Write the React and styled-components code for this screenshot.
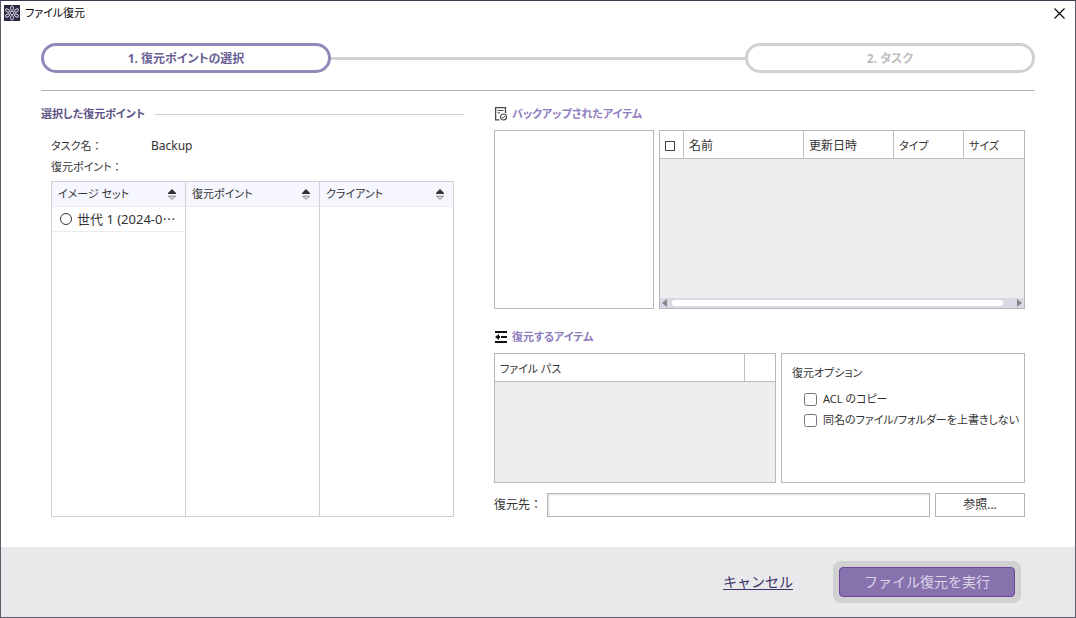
import React, { useState } from 'react';
import styled, { createGlobalStyle } from 'styled-components';

const GlobalStyle = createGlobalStyle`
  * {
    box-sizing: border-box;
  }
  body {
    margin: 0;
    background: #fff;
    color: #333;
    font-family: 'Noto Sans', 'Noto Sans CJK JP', sans-serif;
    font-size: 12px;
    line-height: 20px;
    font-feature-settings: 'palt';
  }
  button, input {
    font: inherit;
    color: inherit;
    margin: 0;
  }
  h1, h2, p {
    margin: 0;
    font-size: inherit;
  }
`;

const Window = styled.div`
  display: flex;
  flex-direction: column;
  min-height: 100vh;
  border: 1px solid #5c5a66;
  border-top-color: #3e3a4c;
`;

const TitleBar = styled.header`
  display: flex;
  align-items: center;
  gap: 5px;
  height: 24px;
  padding: 0 10px 0 3px;
`;

const WindowTitle = styled.h1`
  flex: 1;
  font-size: 11px;
  font-weight: normal;
  color: #000;
`;

const CloseButton = styled.button`
  display: flex;
  padding: 0;
  border: none;
  background: none;
  cursor: pointer;
`;

const Steps = styled.nav`
  display: flex;
  align-items: center;
  margin: 18px 40px 0;
  padding-bottom: 17px;
  border-bottom: 1px solid #b4b4b4;
`;

const Step = styled.div`
  display: flex;
  align-items: center;
  justify-content: center;
  width: 290px;
  height: 30px;
  padding-top: 2px;
  border: 3px solid ${(props) => (props.$active ? '#9487b9' : '#d1d1d1')};
  border-radius: 15px;
  color: ${(props) => (props.$active ? '#6a5f96' : '#bdbdbd')};
  font-weight: bold;
`;

const StepLine = styled.div`
  flex: 1;
  height: 3px;
  background: #d1d1d1;
`;

const Main = styled.main`
  flex: 1;
  display: grid;
  grid-template-columns: 423fr 531fr;
  gap: 30px;
  padding: 13px 50px 30px 40px;
`;

const Column = styled.section`
  display: flex;
  flex-direction: column;
  min-width: 0;
`;

const SectionTitle = styled.h2`
  display: flex;
  align-items: center;
  gap: 4px;
  color: #8f7dc0;
  font-size: 11px;
  font-weight: bold;
`;

const LinedTitle = styled(SectionTitle)`
  gap: 10px;
  color: #5d5285;
  &::after {
    content: '';
    flex: 1;
    height: 1px;
    background: #d0d0d0;
  }
`;

const Details = styled.div`
  flex: 1;
  display: flex;
  flex-direction: column;
  padding: 11px 10px 0;
`;

const DetailRow = styled.p`
  display: flex;
  line-height: 21px;
`;

const DetailLabel = styled.span`
  width: 100px;
  font-size: 11px;
`;

const Colon = styled.span`
  font-feature-settings: normal;
`;

const PointTable = styled.table`
  width: 100%;
  height: 336px;
  margin-top: 4px;
  table-layout: fixed;
  border-spacing: 0;
  border: 1px solid #ceced3;
  border-width: 1px 0 1px 1px;
`;

const PointHead = styled.th`
  height: 25px;
  padding: 0 9px 0 6px;
  background: #f5f6fe;
  border-right: 1px solid #ceced3;
  border-bottom: 1px solid #ebebf2;
  font-size: 11px;
  font-weight: normal;
  text-align: left;
`;

const HeadContent = styled.div`
  display: flex;
  align-items: center;
  justify-content: space-between;
`;

const PointCell = styled.td`
  height: ${(props) => (props.$fill ? 'auto' : '25px')};
  padding: 0 0 0 8px;
  border-right: 1px solid #ceced3;
  border-bottom: ${(props) => (props.$line ? '1px solid #ebebeb' : 'none')};
`;

const PointLabel = styled.label`
  display: flex;
  align-items: center;
  gap: 5px;
  overflow: hidden;
  font-size: 13px;
  white-space: nowrap;
`;

const Dots = styled.span`
  font-family: 'Noto Sans CJK JP', sans-serif;
`;

const Radio = styled.input`
  appearance: none;
  flex: none;
  width: 12px;
  height: 12px;
  border: 1px solid #333;
  border-radius: 50%;
  background: #fff;
  &:checked {
    background: #6a5f96;
    box-shadow: inset 0 0 0 2px #fff;
  }
`;

const Panels = styled.div`
  display: grid;
  grid-template-columns: ${(props) => props.$columns};
  gap: 5px;
  min-height: ${(props) => props.$height}px;
  margin-top: 6px;
`;

const Panel = styled.div`
  display: flex;
  flex-direction: column;
  min-width: 0;
  border: 1px solid #b8b8b8;
  background: ${(props) => (props.$filled ? '#eee' : '#fff')};
`;

const ListTable = styled.table`
  width: 100%;
  table-layout: fixed;
  border-spacing: 0;
  background: #fff;
`;

const ListHead = styled.th`
  width: ${(props) => (props.$width ? `${props.$width}px` : 'auto')};
  height: 28px;
  padding: 2px 5px 0;
  border-right: ${(props) => (props.$last ? 'none' : '1px solid #bdbdbd')};
  border-bottom: 1px solid #bdbdbd;
  font-size: ${(props) => (props.$kana ? '11px' : '12px')};
  font-weight: normal;
  text-align: left;
`;

const SelectAll = styled.input`
  appearance: none;
  display: block;
  width: 10px;
  height: 10px;
  border: 1px solid #444;
  background: #fff;
  &:checked {
    background: #6a5f96;
  }
`;

const ScrollBar = styled.div`
  display: flex;
  align-items: center;
  gap: 5px;
  height: 10px;
  margin-top: auto;
  padding: 0 2px;
  background: #dadae6;
`;

const ScrollTrack = styled.div`
  flex: 1;
  padding-right: 9px;
`;

const ScrollThumb = styled.div`
  height: 6px;
  border-radius: 3px;
  background: #fff;
`;

const ItemsTitle = styled(SectionTitle)`
  margin-top: 18px;
`;

const Options = styled(Panel)`
  padding: 9px 10px;
  font-size: 11px;
`;

const OptionList = styled.div`
  display: flex;
  flex-direction: column;
  gap: 1px;
  padding: 6px 0 0 12px;
`;

const OptionLabel = styled.label`
  display: flex;
  align-items: center;
  gap: 6px;
  white-space: nowrap;
`;

const CheckBox = styled.input`
  flex: none;
  width: 13px;
  height: 13px;
`;

const Destination = styled.div`
  display: flex;
  align-items: center;
  gap: 5px;
  margin-top: 10px;
`;

const DestinationLabel = styled.label`
  width: 48px;
  white-space: nowrap;
`;

const PathInput = styled.input`
  flex: 1;
  min-width: 0;
  height: 24px;
  padding: 0 5px;
  border: 1px solid #b4b4b4;
  box-shadow: inset 1px 1px 2px #ddd;
  outline: none;
`;

const BrowseButton = styled.button`
  width: 90px;
  height: 24px;
  padding: 0;
  border: 1px solid #b4b4b4;
  background: #fff;
  cursor: pointer;
`;

const Footer = styled.footer`
  display: flex;
  align-items: center;
  justify-content: flex-end;
  gap: 40px;
  height: 70px;
  padding: 0 54px 0 20px;
  background: #e9e9eb;
  font-size: 14px;
  font-feature-settings: normal;
`;

const CancelLink = styled.a`
  color: #3f3268;
  text-underline-offset: 2px;
`;

const RunFrame = styled.div`
  padding: 6px;
  border-radius: 8px;
  background: #d1d1d2;
`;

const RunButton = styled.button`
  display: block;
  width: 176px;
  height: 30px;
  padding: 0;
  border: 1px solid #6b4796;
  border-radius: 4px;
  background: #8872ae;
  color: #dcd5e8;
  cursor: pointer;
`;

const LogoIcon = () => (
  <svg width="16" height="16" viewBox="0 0 16 16" fill="none" stroke="#e6e4ee" aria-hidden="true">
    <rect width="16" height="16" fill="#2c2842" stroke="none" />
    <circle cx="8" cy="8" r="1.8" strokeWidth="0.9" />
    <g strokeWidth="0.9">
      <ellipse cx="8" cy="3.2" rx="1.5" ry="2.2" />
      <ellipse cx="8" cy="12.8" rx="1.5" ry="2.2" />
      <ellipse cx="3.5" cy="5.5" rx="1.4" ry="2.1" transform="rotate(-60 3.5 5.5)" />
      <ellipse cx="12.5" cy="5.5" rx="1.4" ry="2.1" transform="rotate(60 12.5 5.5)" />
      <ellipse cx="3.5" cy="10.5" rx="1.4" ry="2.1" transform="rotate(60 3.5 10.5)" />
      <ellipse cx="12.5" cy="10.5" rx="1.4" ry="2.1" transform="rotate(-60 12.5 10.5)" />
    </g>
  </svg>
);

const CloseIcon = () => (
  <svg width="11" height="11" viewBox="0 0 11 11" stroke="#000" strokeWidth="1.1" aria-hidden="true">
    <path d="M.5.5l10 10M10.5.5l-10 10" />
  </svg>
);

const BackupIcon = () => (
  <svg width="14" height="14" viewBox="0 0 14 14" fill="none" stroke="#4a4a4a" aria-hidden="true">
    <path d="M11.5 6V.7H1.600v12.100h3.900" strokeWidth="1.300" />
    <path d="M3.500 3.500h6M3.500 5.800h2.500" strokeWidth="1.100" />
    <circle cx="9.500" cy="10" r="3" strokeWidth="1.200" />
    <path d="M8.200 10.100l1 1 1.700-2" />
  </svg>
);

const RestoreIcon = () => (
  <svg width="14" height="14" viewBox="0 0 14 14" fill="#111" aria-hidden="true">
    <path d="M1 1h12v2H1zM1 11h12v2H1zM7 6h6v2H7zM1 7l4-3v2h1v2H5v2z" />
  </svg>
);

const SortIcon = () => (
  <svg width="8" height="11" viewBox="0 0 8 11" aria-hidden="true">
    <path d="M4 0l4 4v1H0V4z" fill="#333" />
    <path d="M0 6.500h8v1L4 11 0 7.500z" fill="#a5a5ab" />
    <path d="M2.700 8h2.600L4 9.400z" fill="#f5f6fe" />
  </svg>
);

const ScrollArrow = ({ right }) => (
  <svg width="5" height="8" viewBox="0 0 5 8" fill="#858585" aria-hidden="true">
    <path d={right ? 'M0 0l5 4-5 4z' : 'M5 0L0 4l5 4z'} />
  </svg>
);

const pointColumns = ['イメージ セット', '復元ポイント', 'クライアント'];

const RestorePoints = () => (
  <PointTable>
    <thead>
      <tr>
        {pointColumns.map((name) => (
          <PointHead key={name}>
            <HeadContent>
              {name}
              <SortIcon />
            </HeadContent>
          </PointHead>
        ))}
      </tr>
    </thead>
    <tbody>
      <tr>
        <PointCell $line>
          <PointLabel>
            <Radio type="radio" name="generation" />
            <span>世代 1 (2024-0<Dots>…</Dots></span>
          </PointLabel>
        </PointCell>
        <PointCell />
        <PointCell />
      </tr>
      <tr>
        <PointCell $fill />
        <PointCell $fill />
        <PointCell $fill />
      </tr>
    </tbody>
  </PointTable>
);

const BackupItems = () => (
  <Panel $filled>
    <ListTable>
      <thead>
        <tr>
          <ListHead $width={24}>
            <SelectAll type="checkbox" aria-label="すべて選択" />
          </ListHead>
          <ListHead>名前</ListHead>
          <ListHead $width={90}>更新日時</ListHead>
          <ListHead $width={70} $kana>タイプ</ListHead>
          <ListHead $width={60} $kana $last>サイズ</ListHead>
        </tr>
      </thead>
    </ListTable>
    <ScrollBar>
      <ScrollArrow />
      <ScrollTrack>
        <ScrollThumb />
      </ScrollTrack>
      <ScrollArrow right />
    </ScrollBar>
  </Panel>
);

const App = () => {
  const [path, setPath] = useState('');

  return (
    <Window lang="ja">
      <GlobalStyle />
      <TitleBar>
        <LogoIcon />
        <WindowTitle>ファイル復元</WindowTitle>
        <CloseButton type="button" aria-label="閉じる">
          <CloseIcon />
        </CloseButton>
      </TitleBar>
      <Steps>
        <Step $active>1. 復元ポイントの選択</Step>
        <StepLine />
        <Step>2. タスク</Step>
      </Steps>
      <Main>
        <Column>
          <LinedTitle>選択した復元ポイント</LinedTitle>
          <Details>
            <DetailRow>
              <DetailLabel>タスク名<Colon>：</Colon></DetailLabel>
              Backup
            </DetailRow>
            <DetailRow>
              <DetailLabel>復元ポイント<Colon>：</Colon></DetailLabel>
            </DetailRow>
            <RestorePoints />
          </Details>
        </Column>
        <Column>
          <SectionTitle>
            <BackupIcon />
            バックアップされたアイテム
          </SectionTitle>
          <Panels $columns="160fr 366fr" $height={179}>
            <Panel />
            <BackupItems />
          </Panels>
          <ItemsTitle>
            <RestoreIcon />
            復元するアイテム
          </ItemsTitle>
          <Panels $columns="282fr 244fr" $height={130}>
            <Panel $filled>
              <ListTable>
                <thead>
                  <tr>
                    <ListHead $kana>ファイル パス</ListHead>
                    <ListHead as="td" $width={30} $last />
                  </tr>
                </thead>
              </ListTable>
            </Panel>
            <Options>
              復元オプション
              <OptionList>
                <OptionLabel>
                  <CheckBox type="checkbox" />
                  ACL のコピー
                </OptionLabel>
                <OptionLabel>
                  <CheckBox type="checkbox" />
                  同名のファイル/フォルダーを上書きしない
                </OptionLabel>
              </OptionList>
            </Options>
          </Panels>
          <Destination>
            <DestinationLabel htmlFor="destination">
              復元先<Colon>：</Colon>
            </DestinationLabel>
            <PathInput
              id="destination"
              type="text"
              value={path}
              onChange={(event) => setPath(event.target.value)}
            />
            <BrowseButton type="button">参照...</BrowseButton>
          </Destination>
        </Column>
      </Main>
      <Footer>
        <CancelLink href="#cancel">キャンセル</CancelLink>
        <RunFrame>
          <RunButton type="button">ファイル復元を実行</RunButton>
        </RunFrame>
      </Footer>
    </Window>
  );
};

export default App;
